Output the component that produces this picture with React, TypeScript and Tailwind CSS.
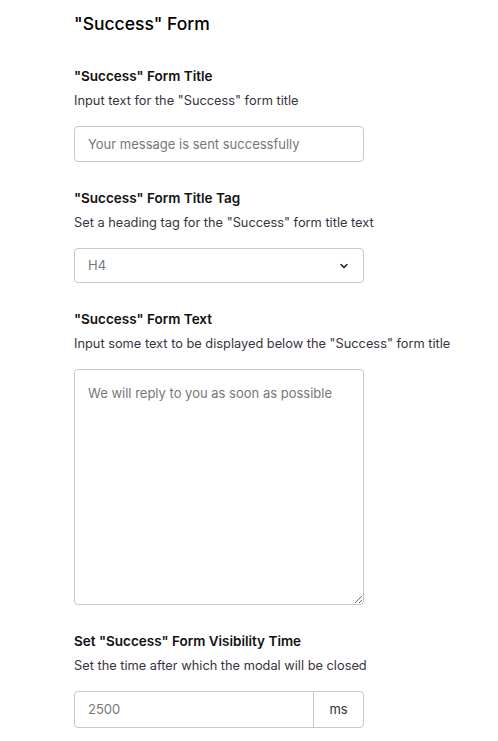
import { ChevronDown } from "lucide-react";

const font = { fontFamily: "Inter, 'Noto Sans', sans-serif" };

function Field({ label, hint, children }: { label: string; hint: string; children: React.ReactNode }) {
  return (
    <div className="mt-[26px] first:mt-0">
      <div className="text-[13.5px] font-semibold leading-[20px] text-[#111]">{label}</div>
      <div className="mt-[6px] whitespace-nowrap text-[12.8px] leading-[18px] text-[#3a3340]">{hint}</div>
      <div className="mt-[16px]">{children}</div>
    </div>
  );
}

export default function App() {
  return (
    <div className="min-h-[741px] bg-white pl-[74px] pt-[12px]" style={font}>
      <div className="w-[290px]">
        <h2 className="text-[17.5px] font-medium leading-[24px] text-black">"Success" Form</h2>
        <div className="mt-[30px]">
          <Field label={'"Success" Form Title'} hint={'Input text for the "Success" form title'}>
            <input
              className="block h-[36px] w-full rounded-[4px] border border-[#c8c8c8] px-[13px] text-[13px] text-[#222] outline-none placeholder:text-[#777]"
              placeholder="Your message is sent successfully"
            />
          </Field>
          <Field label={'"Success" Form Title Tag'} hint={'Set a heading tag for the "Success" form title text'}>
            <div className="flex h-[35px] w-full items-center justify-between rounded-[4px] border border-[#c8c8c8] px-[13px] text-[13px] text-[#777]">
              <span>H4</span>
              <ChevronDown size={12} strokeWidth={3} className="text-[#222]" />
            </div>
          </Field>
          <Field label={'"Success" Form Text'} hint={'Input some text to be displayed below the "Success" form title'}>
            <textarea
              className="block h-[236px] w-full rounded-[4px] border border-[#c8c8c8] px-[13px] py-[14px] text-[13px] text-[#222] outline-none placeholder:text-[#777]"
              placeholder="We will reply to you as soon as possible"
            />
          </Field>
          <Field label={'Set "Success" Form Visibility Time'} hint="Set the time after which the modal will be closed">
            <div className="flex h-[37px] w-full overflow-hidden rounded-[4px] border border-[#c8c8c8]">
              <input
                className="min-w-0 flex-1 px-[13px] text-[13px] text-[#222] outline-none placeholder:text-[#777]"
                placeholder="2500"
              />
              <div className="flex w-[50px] items-center justify-center border-l border-[#c8c8c8] text-[13px] text-[#333]">
                ms
              </div>
            </div>
          </Field>
        </div>
      </div>
    </div>
  );
}
